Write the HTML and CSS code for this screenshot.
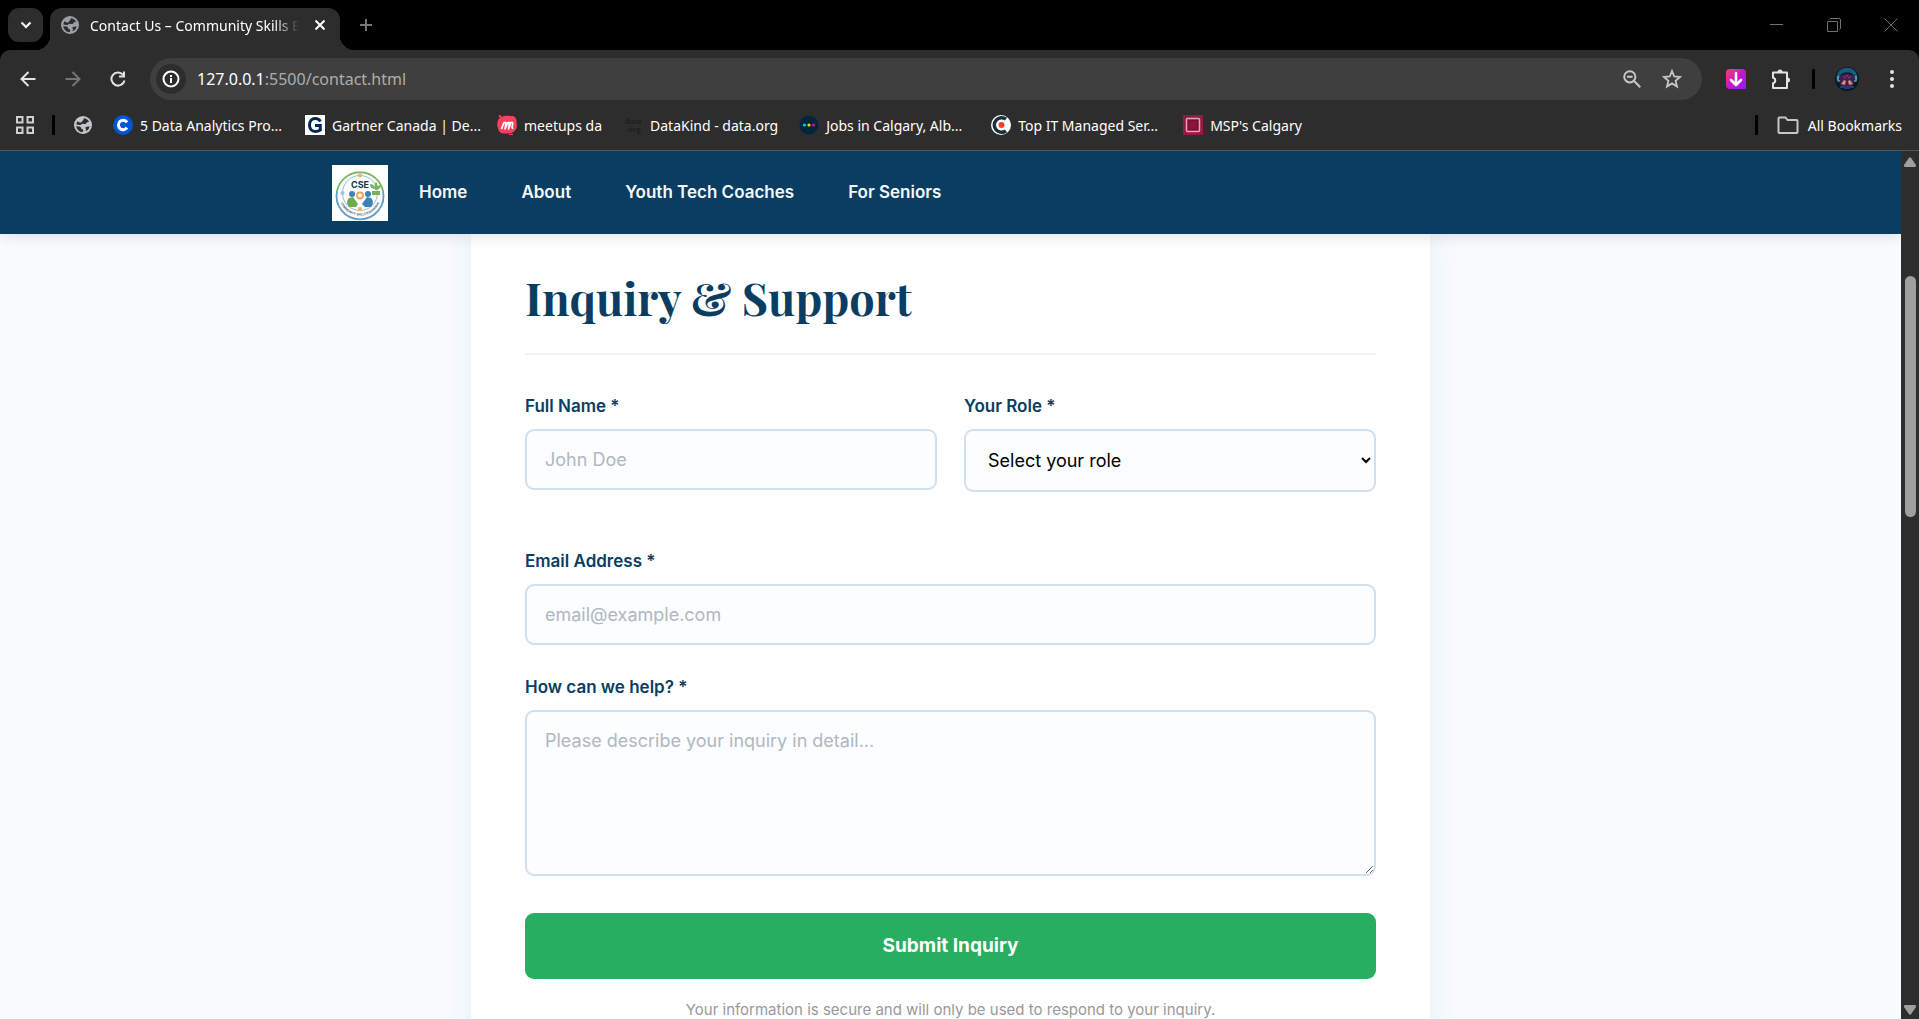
FILE: index.html
```html
<!DOCTYPE html>
<html lang="en">
<head>
<meta charset="utf-8">
<title>Contact Us – Community Skills Exchange</title>
<link rel="stylesheet" href="styles.css">
</head>
<body>
<svg width="0" height="0" class="defs" aria-hidden="true">
  <symbol id="globe" viewBox="0 0 18 18">
    <circle cx="9" cy="9" r="9" fill="currentColor"/>
    <path d="M9.800 2.200C12 2.300 14 3.500 15 5.400c-.7.700-1.700.6-2.300 1.200-.5.600-.3 1.200-1.200 1.400-1 .2-2.200-.5-3.200-.3-1 .2-1 1.100-2 1.200-1.400.1-2.500-.5-4-.5.3-1.300.8-2.400 1.600-3.300.6 1.200 1.600 1.700 2.900 1.400 1.300-.2 1.200-1.500 2-2 .6-.4.900-1.100 1-2.300z" fill="#2d2d2d"/>
    <path d="M2.200 10.200c1.600.1 3.300 0 4.300.8.800.6.4 1.700 1.200 2.100.6.3 1.300 0 1.500.8.200.700-.3 1.300-.4 2.200-3.400 0-6-2.500-6.600-5.900zM11.400 15.200c.1-.8.700-.8.700-1.600 0-.8-.7-.9-.7-1.600 0-1 1-1.200 1.800-1.300 1-.1 1.700-.1 2.400-.5-.3 2.400-1.900 4.300-4.200 5z" fill="#2d2d2d"/>
  </symbol>
</svg>

<div class="browser">
  <div class="tabstrip">
    <button class="tab-search" aria-label="Search tabs"><svg width="12" height="12" viewBox="0 0 12 12"><path d="M1.500 3.500 6 8l4.500-4.500" fill="none" stroke="#fff" stroke-width="2.200"/></svg></button>
    <div class="tab">
      <svg class="tab-icon" width="18" height="18"><use href="#globe"/></svg>
      <span class="tab-title">Contact Us – Community Skills Exchange</span>
      <button class="plain" aria-label="Close tab"><svg width="10" height="10" viewBox="0 0 10 10"><path d="M.5.5l9 9M9.500.5l-9 9" stroke="#fff" stroke-width="2"/></svg></button>
    </div>
    <button class="plain new-tab" aria-label="New tab"><svg width="14" height="14" viewBox="0 0 14 14"><path d="M7 1v12M1 7h12" stroke="#777" stroke-width="2"/></svg></button>
    <div class="window-buttons">
      <button class="plain" aria-label="Minimize"><svg width="14" height="14" viewBox="0 0 14 14"><path d="M0 6.500h13" stroke="#707070"/></svg></button>
      <button class="plain" aria-label="Restore"><svg width="14" height="14" viewBox="0 0 14 14"><path d="M.5 3.500h10v10H.5zM2.500 1.500q.5-1 1.500-1h8q1.500 0 1.500 1.500v8q0 1-1 1.500" fill="none" stroke="#707070"/></svg></button>
      <button class="plain" aria-label="Close"><svg width="14" height="14" viewBox="0 0 14 14"><path d="M.5.5l13 13M13.500.5l-13 13" stroke="#707070"/></svg></button>
    </div>
  </div>

  <div class="toolbar">
    <div class="tool-group">
      <button class="tool" aria-label="Back"><svg width="16" height="16" viewBox="0 0 16 16"><path d="M15.500 8H2M8.500 1 1.500 8l7 7" fill="none" stroke="#e3e3e3" stroke-width="2"/></svg></button>
      <button class="tool" aria-label="Forward"><svg width="16" height="16" viewBox="0 0 16 16"><path d="M.5 8H14M7.500 1l7 7-7 7" fill="none" stroke="#757575" stroke-width="2"/></svg></button>
      <button class="tool" aria-label="Reload"><svg width="16" height="16" viewBox="0 0 16 16"><path d="M14.500 9.500A6.600 6.600 0 1 1 13 3.600L14.500 5" fill="none" stroke="#e3e3e3" stroke-width="2"/><path d="M15 .5v6H9v-2h4v-4z" fill="#e3e3e3"/></svg></button>
    </div>
    <div class="omnibox">
      <button class="site-info" aria-label="View site information"><svg width="18" height="18" viewBox="0 0 18 18"><circle cx="9" cy="9" r="7.500" fill="none" stroke="#fff" stroke-width="2"/><path d="M9 8v5M9 5v2" stroke="#fff" stroke-width="2"/></svg></button>
      <div class="url">127.0.0.1<span class="url-path">:5500/contact.html</span></div>
      <button class="plain" aria-label="Zoom"><svg width="18" height="18" viewBox="0 0 18 18"><circle cx="6.800" cy="6.800" r="5.600" fill="none" stroke="#c7c7c7" stroke-width="2"/><path d="M4 6.800h5.600M11 11l6.300 6.300" stroke="#c7c7c7" stroke-width="2"/></svg></button>
      <button class="plain" aria-label="Bookmark this page"><svg width="20" height="20" viewBox="0 0 20 20"><path d="M10 2l2.200 5.500 5.800.5-4.400 3.800 1.400 5.700-5-3.100-5 3.100 1.400-5.700L2 8l5.800-.5z" fill="none" stroke="#c7c7c7" stroke-width="1.800"/></svg></button>
    </div>
    <div class="tool-group">
      <button class="tool" aria-label="Downloader extension"><svg width="20" height="20" viewBox="0 0 20 20"><defs><linearGradient id="dl" x1="0" y1="0" x2="1" y2="1"><stop offset="0" stop-color="#f5426b"/><stop offset=".5" stop-color="#c816c8"/><stop offset="1" stop-color="#8a1cff"/></linearGradient></defs><path d="M4 0h12q4 0 4 4v16H4q-4 0-4-4V4q0-4 4-4z" fill="url(#dl)"/><path d="M10 4v12M5 11l5 5 5-5" fill="none" stroke="#fff" stroke-width="2.600" stroke-linecap="round" stroke-linejoin="round"/></svg></button>
      <button class="tool" aria-label="Extensions"><svg width="22" height="22" viewBox="0 0 22 22"><path d="M3 4.500h14v15.500H3v-4.800c3-.5 3-5 0-5.500z" fill="none" stroke="#e3e3e3" stroke-width="2" stroke-linejoin="round"/><path d="M7.500 4a2.500 2.500 0 0 1 5 0zM17.500 9.500a2.500 2.500 0 0 1 0 5z" fill="#e3e3e3"/></svg></button>
    </div>
    <span class="divider"></span>
    <div class="tool-group">
      <button class="tool" aria-label="Profile"><svg width="24" height="24" viewBox="0 0 24 24"><circle cx="12" cy="12" r="12" fill="#0b1820"/><path d="M1.500 13C1 5 6 .8 12 .8S23 5 22.500 13l-3-1C19 7 17 5.500 12 5.500S5 7 4.500 12z" fill="#185d7e"/><path d="M5 9q7-5 14 0l1 6-3 5H7l-3-5z" fill="#38204f"/><path d="M6 17l3-4 2 1-1 4zM18 17l-3-4-2 1 1 4z" fill="#d88a74"/><path d="M8 9l2 2 2-3 2 3 2-2" stroke="#8a2b62" stroke-width="1.200" fill="none"/><path d="M3 9v5h2M21 9v5h-2" stroke="#69c7dd" stroke-width="1.200" fill="none"/><path d="M5 20h14" stroke="#2a6f90" stroke-width="1"/><path d="M9 19h6v3H9z" fill="#293183"/></svg></button>
      <button class="tool" aria-label="Menu"><svg width="4" height="18" viewBox="0 0 4 18"><circle cx="2" cy="2" r="2" fill="#e3e3e3"/><circle cx="2" cy="9" r="2" fill="#e3e3e3"/><circle cx="2" cy="16" r="2" fill="#e3e3e3"/></svg></button>
    </div>
  </div>

  <nav class="bookmarks" aria-label="Bookmarks">
    <button class="plain" aria-label="Apps"><svg width="18" height="18" viewBox="0 0 18 18"><path d="M1 1h5.500v5.500H1zM11.500 1H17v5.500h-5.500zM1 11.500h5.500V17H1zM11.500 11.500H17V17h-5.500z" fill="none" stroke="#d0d0d0" stroke-width="2"/></svg></button>
    <span class="divider"></span>
    <a class="bookmark" href="#" aria-label="Site"><svg class="pale" width="18" height="18"><use href="#globe"/></svg></a>
    <a class="bookmark long" href="#"><svg width="20" height="20" viewBox="0 0 20 20"><circle cx="10" cy="10" r="10" fill="#0056d2"/><path d="M14 7.300A4.700 4.700 0 1 0 14 12.700" fill="none" stroke="#fff" stroke-width="3"/></svg>5 Data Analytics Pro...</a>
    <a class="bookmark long" href="#"><svg width="20" height="20" viewBox="0 0 20 20"><path d="M0 0h20v20H0z" fill="#fff"/><path d="M15.500 6.500C14 4 12 3.500 10.300 3.500 6.500 3.500 4.500 6.300 4.500 10s2 6.500 5.800 6.500c2 0 3.700-.6 5-1.500v-4.500H10" fill="none" stroke="#002856" stroke-width="3"/></svg>Gartner Canada | De...</a>
    <a class="bookmark" href="#"><svg width="20" height="20" viewBox="0 0 20 20"><path d="M4 2C8 0 13 1 16 1c3 1 4 4 3.500 7 1 3 0 6-2 8-3 3-6 2-9 2.500-4 .5-7-1-7.500-5C-.5 10 0 4 4 2z" fill="#f64060"/><circle cx="3" cy="1.200" r="1.200" fill="#f64060"/><path d="M12 19.500h4" stroke="#f64060" stroke-width="1.500"/><path d="M4.500 14 7 7.500l2 0L8 14l3-6.500h1.500L11.500 14l2.500-6.500c2-.6 2 1 1.500 2.500-.6 1.500-.8 3.500.8 3" fill="none" stroke="#fff" stroke-width="1.700" stroke-linejoin="round"/></svg>meetups da</a>
    <a class="bookmark" href="#"><span class="data-icon">data<br>.org</span>DataKind - data.org</a>
    <a class="bookmark long" href="#"><svg width="20" height="20" viewBox="0 0 20 20"><circle cx="10" cy="10" r="9.500" fill="#03263e"/><circle cx="5.500" cy="10" r="1.600" fill="#00c8e6"/><circle cx="10" cy="10" r="1.600" fill="#ffd400"/><circle cx="14.500" cy="10" r="1.600" fill="#ec008c"/></svg>Jobs in Calgary, Alb...</a>
    <a class="bookmark long" href="#"><svg width="20" height="20" viewBox="0 0 20 20"><circle cx="10" cy="10" r="10" fill="#fff"/><path d="M15 4.200A7.300 7.300 0 1 0 15 15.800" fill="none" stroke="#17313b" stroke-width="3.500"/><circle cx="10.500" cy="10" r="3" fill="#ff3d2e"/></svg>Top IT Managed Ser...</a>
    <a class="bookmark" href="#"><svg width="20" height="20" viewBox="0 0 20 20"><path d="M0 0h20v20H0z" fill="#951940"/><rect x="3.500" y="3.500" width="13" height="13" rx="1" fill="#8b1538" stroke="#dfa5b6" stroke-width="1.500"/><rect x="5.500" y="5.500" width="9" height="9" fill="none" stroke="#741030"/></svg>MSP's Calgary</a>
    <span class="divider push"></span>
    <a class="bookmark folder" href="#"><svg width="22" height="18" viewBox="0 0 22 18"><path d="M1.500 2.500q0-1 1-1h6l2 2.500h9q1 0 1 1v11q0 1-1 1h-17q-1 0-1-1z" fill="none" stroke="#c7c7c7" stroke-width="2"/></svg>All Bookmarks</a>
  </nav>
</div>

<div class="viewport">
  <div class="page">
    <header class="site-header">
      <div class="site-nav">
        <a class="logo" href="#" aria-label="Community Skills Exchange">
          <svg width="56" height="56" viewBox="0 0 56 56">
            <path d="M0 0h56v56H0z" fill="#fff"/>
            <circle cx="28" cy="28" r="23.500" fill="#fcfefd"/>
            <path d="M5 26a23.500 23.500 0 0 1 46 0" fill="none" stroke="#7db35c" stroke-width="1.800"/>
            <path d="M5 26a23.500 23.500 0 1 0 46 0" fill="none" stroke="#5f9dc8" stroke-width="1.800"/>
            <circle cx="28" cy="28" r="17.500" fill="none" stroke="#8dbdd9" stroke-width="1"/>
            <circle cx="28" cy="10.500" r="2" fill="#f5b163"/><circle cx="28" cy="44" r="2" fill="#f5b163"/>
            <circle cx="10.500" cy="28" r="2" fill="#94c1df"/>
            <path d="M42 24q-4-1-4-5 4 0 5 4-1-4 1-6 3 3 0 7 1-4 5-4 0 4-5 5zM40 26h8v4h-8z" fill="#79b05c"/>
            <circle cx="20" cy="29" r="3" fill="#3c83b5"/><circle cx="36" cy="29" r="3" fill="#3c83b5"/>
            <path d="M17 33l4-1 5 7-2 3h-7q-4-5 0-9z" fill="#6cab50"/><path d="M39 33l-4-1-5 7 3 3h6q4-5 0-9z" fill="#3c83b5"/>
            <circle cx="28" cy="30.500" r="3" fill="#fff" stroke="#eda159" stroke-width="1.800"/>
            <path id="arc" d="M8 36a21 21 0 0 0 40 0" fill="none"/>
            <text class="logo-name" x="28" y="23" text-anchor="middle">CSE</text>
            <text class="logo-ring"><textPath href="#arc" startOffset="50%" text-anchor="middle">COMMUNITY SKILLS EXCHANGE</textPath></text>
          </svg>
        </a>
        <nav class="links" aria-label="Main">
          <a href="#">Home</a>
          <a href="#">About</a>
          <a href="#">Youth Tech Coaches</a>
          <a href="#">For Seniors</a>
        </nav>
      </div>
    </header>
    <main class="card">
      <h2>Inquiry &amp; Support</h2>
      <form>
        <div class="row">
          <div class="group">
            <label for="name">Full Name *</label>
            <input id="name" type="text" placeholder="John Doe">
          </div>
          <div class="group">
            <label for="role">Your Role *</label>
            <select id="role"><option>Select your role</option><option>Senior</option><option>Youth Tech Coach</option></select>
          </div>
        </div>
        <div class="group">
          <label for="email">Email Address *</label>
          <input id="email" type="email" placeholder="email@example.com">
        </div>
        <div class="group">
          <label for="message">How can we help? *</label>
          <textarea id="message" rows="5" placeholder="Please describe your inquiry in detail..."></textarea>
        </div>
        <button class="submit" type="submit">Submit Inquiry</button>
        <p class="note">Your information is secure and will only be used to respond to your inquiry.</p>
      </form>
    </main>
  </div>
  <div class="scrollbar" aria-hidden="true">
    <svg width="12" height="10" viewBox="0 0 12 10"><path d="M5 .8q1-1 2 0l5 7.200q.3 1.700-1.200 2H1.200Q-.3 9.700 0 8z" fill="#9f9f9f"/></svg>
    <div class="track"><div class="thumb"></div></div>
    <svg width="12" height="10" viewBox="0 0 12 10"><path d="M5 9.200q1 1 2 0L12 2Q12.300.3 10.800 0H1.200Q-.3.3 0 2z" fill="#9f9f9f"/></svg>
  </div>
</div>
</body>
</html>
```
FILE: styles.css
```css
* { box-sizing: border-box; }

html, body { height: 100%; }

body {
  margin: 0;
  display: flex;
  flex-direction: column;
  overflow: hidden;
  background: #000;
  font-family: Inter, "Liberation Sans", sans-serif;
}

.defs { position: absolute; }
svg { display: block; flex: none; }
a { color: inherit; text-decoration: none; }
button, input, select, textarea { font-family: inherit; }

/* Browser window */
.browser {
  flex: none;
  color: #fff;
  font-family: "Noto Sans", "Open Sans", sans-serif;
  font-size: 14px;
}

.plain, .tool, .tab-search, .site-info {
  display: flex;
  align-items: center;
  justify-content: center;
  padding: 0;
  border: 0;
  background: none;
}

.tabstrip {
  display: flex;
  height: 50px;
  padding: 8px 21px 0 8px;
}

.tab-search {
  width: 35px;
  height: 34px;
  margin-right: 7px;
  border-radius: 11px;
  background: #2d2d2d;
}

.tab {
  position: relative;
  display: flex;
  align-items: center;
  width: 290px;
  padding: 0 15px 8px 11px;
  border-radius: 12px 12px 0 0;
  background: #2d2d2d;
}

.tab::before, .tab::after {
  content: "";
  position: absolute;
  bottom: 0;
  width: 14px;
  height: 14px;
}
.tab::before { right: 100%; background: radial-gradient(circle at 0 0, transparent 14px, #2d2d2d 14px); }
.tab::after { left: 100%; background: radial-gradient(circle at 100% 0, transparent 14px, #2d2d2d 14px); }

.tab-icon { color: #9aa0a6; }
.tab-title {
  flex: 1;
  margin: 0 16px 0 11px;
  overflow: hidden;
  white-space: nowrap;
  -webkit-mask-image: linear-gradient(90deg, #000 88%, transparent);
  mask-image: linear-gradient(90deg, #000 88%, transparent);
}
.new-tab { margin: 0 0 8px 19px; }

.window-buttons {
  display: flex;
  gap: 43px;
  margin: 0 0 8px auto;
}

.toolbar {
  display: flex;
  align-items: center;
  height: 58px;
  padding: 0 9px 0 10px;
  border-radius: 10px 10px 0 0;
  background: #2d2d2d;
}
.tool-group { display: flex; gap: 9px; }
.tool { width: 36px; height: 36px; }

.omnibox {
  flex: 1;
  display: flex;
  align-items: center;
  gap: 21px;
  height: 42px;
  margin: 0 16px 0 14px;
  padding: 0 20px 0 6px;
  border-radius: 21px;
  background: #3f3f3f;
}
.site-info {
  width: 30px;
  height: 30px;
  border-radius: 50%;
  background: #2d2d2d;
}
.url {
  flex: 1;
  margin-left: -10px;
  font-size: 16px;
}
.url-path { color: #adadad; }

.divider {
  width: 3px;
  height: 20px;
  border-radius: 1px;
  background: #000;
}
.toolbar .divider { margin: 0 14px 0 13px; }

.bookmarks {
  display: flex;
  align-items: center;
  height: 43px;
  padding: 0 17px 8px 16px;
  border-bottom: 1px solid #555;
  background: #2d2d2d;
}
.bookmarks .divider { margin: 0 19px 0 18px; }
.bookmarks .push { margin-left: auto; }
.bookmark {
  display: flex;
  align-items: center;
  gap: 7px;
  margin-right: 21px;
  white-space: nowrap;
}
.long { width: 171px; }
.pale { color: #c3c5c9; }
.bookmarks .folder { margin-right: 0; gap: 9px; }
.data-icon {
  width: 20px;
  color: #1f1f1f;
  font: bold 9px/8px "Liberation Serif", serif;
  text-align: center;
}

/* Web page */
.viewport {
  flex: 1;
  display: flex;
  min-height: 0;
}

.page {
  flex: 1;
  overflow: hidden;
  background: #f8fcff;
}

.site-header {
  position: relative;
  z-index: 1;
  padding: 14px 24px 13px;
  background: #0a3d62;
  box-shadow: 0 2px 14px rgba(0, 0, 0, .12);
}
.site-nav {
  display: flex;
  align-items: center;
  gap: 31px;
  max-width: 1237px;
  margin: 0 auto;
}
.logo-name { font: bold 9px Inter, sans-serif; fill: #17364f; }
.logo-ring { font: bold 3px Inter, sans-serif; fill: #4a5560; }
.links {
  display: flex;
  gap: 54px;
  padding-bottom: 2px;
  color: #f5f8fa;
  font-size: 17px;
  font-weight: 600;
}

.card {
  max-width: 959px;
  margin: -19px auto 0;
  padding: 54px;
  background: #fff;
  box-shadow: 0 10px 34px rgba(10, 61, 98, .07);
}

h2 {
  margin: 0 0 36px;
  padding-bottom: 28px;
  border-bottom: 2px solid #eef3f8;
  color: #0a3d62;
  font: bold 45px/56px "Playfair Display", "Liberation Serif", serif;
}

.row {
  display: grid;
  grid-template-columns: 1fr 1fr;
  gap: 27px;
}
.group { margin-bottom: 27px; }
.row { margin-bottom: 27px; }

label {
  display: block;
  margin-bottom: 8px;
  color: #0a3d62;
  font-size: 17px;
  font-weight: 600;
  line-height: 30px;
}

input, select, textarea {
  display: block;
  width: 100%;
  padding: 18px;
  border: 2px solid #d1e0ed;
  border-radius: 9px;
  background: #fbfdff;
  color: #000;
  font-size: 18px;
  line-height: 21px;
}
input { height: 61px; }
select { height: 63px; }
textarea {
  height: 166px;
  resize: vertical;
}
::placeholder { color: #b0b8c0; }

.submit {
  display: block;
  width: 100%;
  margin-top: 37px;
  padding: 22px;
  border: 0;
  border-radius: 9px;
  background: #27ae60;
  color: #fff;
  font-size: 19px;
  font-weight: 700;
  line-height: 22px;
}

.note {
  margin: 18px 0 0;
  color: #999;
  font-size: 15px;
  line-height: 26px;
  text-align: center;
}

.scrollbar {
  display: flex;
  flex-direction: column;
  align-items: center;
  justify-content: space-between;
  width: 18px;
  padding: 6px 0 4px;
  background: #2d2d2d;
}
.track {
  flex: 1;
  width: 11px;
  padding-top: 109px;
}
.thumb {
  height: 33%;
  border-radius: 6px;
  background: #9f9f9f;
}
```
